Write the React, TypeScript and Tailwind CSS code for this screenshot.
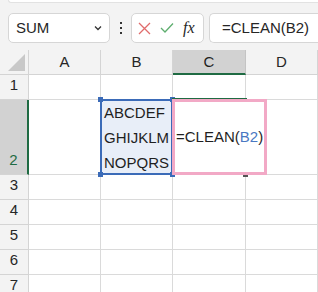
import React from 'react';

const font = { fontFamily: '"Liberation Sans", Arial, sans-serif' };

const rows = [
  { label: '1', h: 'h-[25px]' },
  { label: '2', h: 'h-[75px]' },
  { label: '3', h: 'h-[25px]' },
  { label: '4', h: 'h-[25px]' },
  { label: '5', h: 'h-[25px]' },
  { label: '6', h: 'h-[25px]' },
  { label: '7', h: 'h-[25px]' },
];

const cols = [
  { label: 'A', w: 'w-[72px]' },
  { label: 'B', w: 'w-[72px]' },
  { label: 'C', w: 'w-[73px]' },
  { label: 'D', w: 'w-[72px]' },
];

const Toolbar: React.FC = () => (
  <div className="h-[50px] bg-[#f3f3f3] relative">
    {/* bottom edge of the ribbon */}
    <div className="ml-[8px] h-[3px] bg-white rounded-bl-[6px] border-l border-b border-[#e2e2e2]" />
    <div className="flex items-center mt-[10px] pl-[8px] gap-0">
      {/* name box */}
      <div className="w-[102px] h-[30px] bg-white border border-[#d6d6d6] rounded-[5px] flex items-center justify-between pl-[7px] pr-[6px]">
        <span className="text-[15px] text-[#262626]">SUM</span>
        <svg width="10" height="10" viewBox="0 0 10 10" className="text-[#333]">
          <path d="M2 3.5 L5 6.5 L8 3.5" fill="none" stroke="currentColor" strokeWidth="1.3" />
        </svg>
      </div>
      {/* kebab */}
      <div className="w-[21px] flex flex-col items-center gap-[3px]">
        <span className="w-[2px] h-[2px] bg-[#333]" />
        <span className="w-[2px] h-[2px] bg-[#333]" />
        <span className="w-[2px] h-[2px] bg-[#333]" />
      </div>
      {/* cancel / enter / fx */}
      <div className="w-[73px] h-[30px] bg-white border border-[#d6d6d6] rounded-[5px] flex items-center pl-[6px] gap-[9px]">
        <svg width="13" height="13" viewBox="0 0 13 13">
          <path d="M1 1 L12 12 M12 1 L1 12" stroke="#e06c6c" strokeWidth="1.3" fill="none" />
        </svg>
        <svg width="14" height="12" viewBox="0 0 14 12">
          <path d="M1 6 L5 10 L13 1.5" stroke="#5eae6f" strokeWidth="1.3" fill="none" />
        </svg>
        <span className="text-[16px] italic text-[#262626]" style={{ fontFamily: '"Liberation Serif", serif' }}>fx</span>
      </div>
      {/* formula bar */}
      <div className="ml-[5px] flex-1 h-[30px] bg-white border border-[#d6d6d6] border-r-0 rounded-l-[5px] flex items-center pl-[12px]">
        <span className="text-[15px] text-[#262626]">=CLEAN(B2)</span>
      </div>
    </div>
  </div>
);

const App: React.FC = () => {
  return (
    <div className="w-[318px] h-[292px] overflow-hidden bg-white" style={font}>
      <Toolbar />
      <div className="relative">
        {/* column header row */}
        <div className="flex h-[25px]">
          <div className="w-[29px] shrink-0 bg-[#f3f3f3] border-r border-b border-[#d4d4d4] relative flex items-end justify-end pr-[3px] pb-[3px]">
            <svg width="17" height="17" viewBox="0 0 17 17">
              <path d="M17 0 L17 17 L0 17 Z" fill="#c8c8c8" />
            </svg>
          </div>
          {cols.map((c) => (
            <div
              key={c.label}
              className={`${c.w} shrink-0 border-r flex items-center justify-center text-[15px] ${
                c.label === 'C'
                  ? 'bg-[#d2d2d2] border-b-2 border-b-[#1f6b43] border-r-[#c4c4c4] text-[#1f1f1f] pt-[1px]'
                  : 'bg-[#f3f3f3] border-b border-[#d4d4d4] text-[#262626]'
              }`}
            >
              {c.label}
            </div>
          ))}
          <div className="flex-1 bg-[#f3f3f3] border-b border-[#d4d4d4]" />
        </div>

        {rows.map((r) => (
          <div key={r.label} className={`flex ${r.h}`}>
            <div
              className={`w-[29px] shrink-0 border-b border-[#d4d4d4] flex items-end justify-center pb-[3px] text-[15px] ${
                r.label === '2'
                  ? 'bg-[#d2d2d2] border-r-2 border-r-[#1f6b43] text-[#1f6b43]'
                  : 'bg-[#f3f3f3] border-r text-[#262626]'
              }`}
            >
              {r.label}
            </div>
            {cols.map((c) => (
              <div key={c.label} className={`${c.w} shrink-0 border-r border-b border-[#dadada]`} />
            ))}
            <div className="flex-1 border-b border-[#dadada]" />
          </div>
        ))}

        {/* B2 range highlight */}
        <div className="absolute left-[100px] top-[49px] w-[73px] h-[76px] bg-[#e8eef8] border-2 border-[#3b6bb8] flex flex-col justify-center pl-[2px] text-[15px] leading-[25px] text-[#1f1f1f]">
          <span>ABCDEF</span>
          <span>GHIJKLM</span>
          <span>NOPQRS</span>
        </div>
        <span className="absolute left-[98px] top-[47px] w-[5px] h-[5px] bg-[#3b6bb8]" />
        <span className="absolute left-[170px] top-[47px] w-[5px] h-[5px] bg-[#3b6bb8]" />
        <span className="absolute left-[98px] top-[122px] w-[5px] h-[5px] bg-[#3b6bb8]" />
        <span className="absolute left-[170px] top-[122px] w-[5px] h-[5px] bg-[#3b6bb8]" />

        {/* active cell C2 outline */}
        <div className="absolute left-[172px] top-[48px] w-[75px] h-[77px] border-2 border-[#1f6b43]" />
        <span className="absolute left-[243px] top-[122px] w-[5px] h-[5px] bg-[#555]" />

        {/* in-cell edit box */}
        <div className="absolute left-[172px] top-[49px] w-[95px] h-[76px] bg-white border-[3px] border-[#f2a9c6] flex items-center pl-[1px] text-[15px] text-[#1f1f1f]">
          <span>
            =CLEAN(<span className="text-[#4a78c2]">B2</span>)
          </span>
        </div>
      </div>
    </div>
  );
};

export default App;
